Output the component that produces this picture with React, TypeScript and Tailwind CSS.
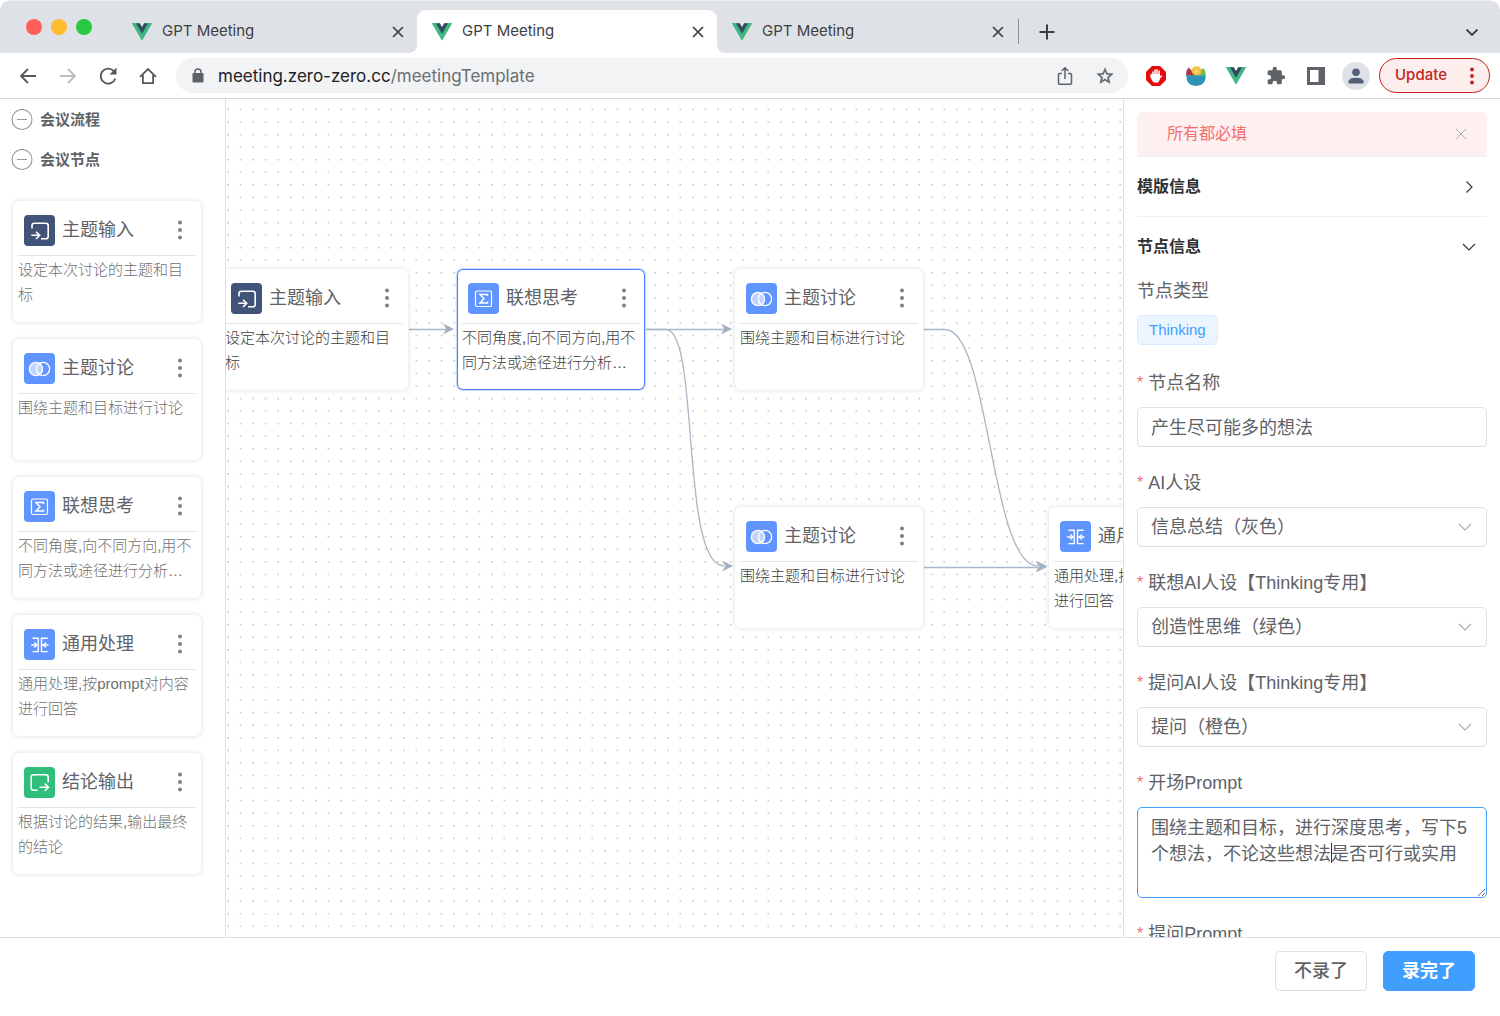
import React, { useState } from "react";

type NodeKind = "input" | "discuss" | "think" | "general" | "output";

const NODES: Record<NodeKind, { title: string; desc: string }> = {
  input: { title: "主题输入", desc: "设定本次讨论的主题和目标" },
  discuss: { title: "主题讨论", desc: "围绕主题和目标进行讨论" },
  think: { title: "联想思考", desc: "不同角度,向不同方向,用不同方法或途径进行分析…" },
  general: { title: "通用处理", desc: "通用处理,按prompt对内容进行回答" },
  output: { title: "结论输出", desc: "根据讨论的结果,输出最终的结论" },
};

function VueLogo() {
  return (
    <svg width="20" height="18" viewBox="0 0 256 221" aria-hidden="true">
      <path fill="#41b883" d="M204.8 0H256L128 220.8 0 0h97.9L128 51.2 157.4 0z" />
      <path fill="#41b883" d="m0 0 128 220.8L256 0h-51.2L128 132.5 50.6 0z" />
      <path fill="#35495e" d="M50.6 0 128 133.1 204.8 0h-47.4L128 51.2 97.9 0z" />
    </svg>
  );
}

function CrossIcon({ size, className }: { size: number; className: string }) {
  return (
    <svg width={size} height={size} viewBox="0 0 12 12" className={className} aria-hidden="true">
      <path d="M1 1 11 11M11 1 1 11" fill="none" stroke="currentColor" />
    </svg>
  );
}

function Chevron({ right = false }: { right?: boolean }) {
  return (
    <svg width="14" height="14" viewBox="0 0 14 14" fill="none" stroke="currentColor" strokeWidth="1.100" aria-hidden="true">
      {right ? <path d="M4.500 1.500 10 7l-5.500 5.500" /> : <path d="M1 4l6 6 6-6" />}
    </svg>
  );
}

function KindIcon({ kind }: { kind: NodeKind }) {
  const fill = kind === "input" ? "#42537a" : kind === "output" ? "#2fbf7a" : "#6095ff";
  return (
    <svg width="31" height="31" viewBox="0 0 31 31" className="shrink-0" aria-hidden="true">
      <rect width="31" height="31" rx="4" fill={fill} />
      <g fill="none" stroke="#fff" strokeWidth="1.600">
        {kind === "input" && (
          <>
            <path d="M8 13.500V10.500Q8 8.200 10.300 8.200H21.800Q24.200 8.200 24.200 10.500V21.500Q24.200 23.800 21.800 23.800H17" />
            <path d="M7.300 20.300H15.200M12 16.700 15.700 20.300 12 24" />
          </>
        )}
        {kind === "output" && (
          <>
            <path d="M24.200 15.300V10.200Q24.200 7.800 21.800 7.800H9.500Q7.200 7.800 7.200 10.200V20.800Q7.200 23.200 9.500 23.200H13.500" />
            <path d="M15.500 20.300H24.300M20.700 16.700 24.500 20.300 20.700 24" />
          </>
        )}
        {kind === "discuss" && (
          <g strokeWidth="1.300">
            <circle cx="12" cy="16" r="6.600" fill="#fff" fillOpacity="0.6" />
            <circle cx="19" cy="16" r="6.600" />
          </g>
        )}
        {kind === "think" && (
          <g strokeWidth="1.200">
            <rect x="7.500" y="8" width="16" height="15.500" rx="1.500" />
            <path strokeWidth="1.500" d="M19.500 13V11.500H12L16 15.800 12 20H19.500V18.500" />
          </g>
        )}
        {kind === "general" && (
          <g strokeWidth="1.400">
            <path d="M8.500 9.200H14.200V22.600H8.500M23.700 9.200H17.500V22.600H23.700M17.500 16H24.500M7.200 16H13" />
            <path d="M10.300 13.500 12.800 16 10.300 18.500M22 13.500 19.500 16 22 18.500" />
          </g>
        )}
      </g>
    </svg>
  );
}

function KebabDots() {
  return (
    <svg width="4" height="20" viewBox="0 0 4 20" fill="#808080" aria-hidden="true">
      <circle cx="2" cy="2.500" r="2" />
      <circle cx="2" cy="10" r="2" />
      <circle cx="2" cy="17.500" r="2" />
    </svg>
  );
}

function NodeCard({ kind, selected = false, soft = false }: { kind: NodeKind; selected?: boolean; soft?: boolean }) {
  const { title, desc } = NODES[kind];
  return (
    <article
      className={`h-[121px] w-[188px] rounded-md bg-white p-[5px] ${
        selected
          ? "shadow-[inset_0_0_0_1px_#4a80f5,0_0_1px_1px_#c5d6fc]"
          : "shadow-[0_0_4px_1px_rgba(0,0,0,0.10)]"
      }`}
    >
      <header className="flex h-[50px] items-center border-b border-[#e4e5e8] pr-[14px] pb-px pl-[6px]">
        <KindIcon kind={kind} />
        <h3 className="ml-[7px] flex-1 text-[18px] leading-6 whitespace-nowrap text-[#606266]">{title}</h3>
        <button type="button" aria-label={`${title}菜单`}>
          <KebabDots />
        </button>
      </header>
      <p className={`pt-px text-[15px] leading-[25px] font-light ${soft ? "text-[#707070]" : "text-[#404040]"}`}>
        {desc}
      </p>
    </article>
  );
}

function BrowserTab({ active = false }: { active?: boolean }) {
  return (
    <div
      role="tab"
      aria-selected={active}
      className={`relative flex h-[43px] w-[300px] items-center rounded-t-[9px] pr-[12px] pl-[15px] ${active ? "bg-white" : ""}`}
    >
      {active && (
        <>
          <svg className="absolute bottom-0 -left-[9px]" width="9" height="9" aria-hidden="true">
            <path d="M9 0V9H0Q9 9 9 0" fill="#fff" />
          </svg>
          <svg className="absolute -right-[9px] bottom-0" width="9" height="9" aria-hidden="true">
            <path d="M0 0V9H9Q0 9 0 0" fill="#fff" />
          </svg>
        </>
      )}
      <VueLogo />
      <span className="ml-[10px] flex-1 text-[15px] text-[#3c4043]">GPT Meeting</span>
      <button type="button" aria-label="关闭标签页" className="text-[#3c4043]">
        <svg width="14" height="14" viewBox="0 0 14 14" fill="none" stroke="currentColor" strokeWidth="1.700" aria-hidden="true">
          <path d="M2 2 12 12M12 2 2 12" />
        </svg>
      </button>
    </div>
  );
}

function TabStrip() {
  return (
    <div className="flex h-[53px] shrink-0 items-end rounded-t-[10px] border-t border-[#eceef0] bg-[#dee1e6]">
      <div className="mb-[18px] ml-[26px] flex w-[91px] gap-[9px]">
        <span className="size-4 rounded-full bg-[#ff5f57]" />
        <span className="size-4 rounded-full bg-[#febc2e]" />
        <span className="size-4 rounded-full bg-[#28c840]" />
      </div>
      <div role="tablist" className="flex">
        <BrowserTab />
        <BrowserTab active />
        <BrowserTab />
      </div>
      <div className="flex h-[43px] flex-1 items-center pr-[21px]">
        <span className="ml-px h-[25px] w-px bg-[#8d9196]" />
        <button type="button" aria-label="新标签页" className="ml-5">
          <svg width="16" height="16" viewBox="0 0 16 16" stroke="#3c4043" strokeWidth="2" aria-hidden="true">
            <path d="M8 .5V15.500M.5 8H15.500" />
          </svg>
        </button>
        <button type="button" aria-label="搜索标签页" className="ml-auto">
          <svg width="14" height="14" viewBox="0 0 14 14" fill="none" stroke="#3c4043" strokeWidth="1.800" aria-hidden="true">
            <path d="M1.500 4.500 7 10l5.500-5.500" />
          </svg>
        </button>
      </div>
    </div>
  );
}

function Toolbar() {
  return (
    <div className="flex h-[46px] shrink-0 items-center border-b border-[#d5d8db] bg-white pr-[10px] pl-[18px]">
      <div className="flex gap-5 text-[#5f6368]">
        <button type="button" aria-label="后退">
          <svg width="20" height="20" viewBox="0 0 20 20" fill="none" stroke="#55595e" strokeWidth="1.800" aria-hidden="true">
            <path d="M18 10H3.500M10 3 3 10l7 7" />
          </svg>
        </button>
        <button type="button" aria-label="前进">
          <svg width="20" height="20" viewBox="0 0 20 20" fill="none" stroke="#babcbe" strokeWidth="1.800" aria-hidden="true">
            <path d="M2 10H16.500M10 3l7 7-7 7" />
          </svg>
        </button>
        <button type="button" aria-label="重新加载">
          <svg width="20" height="20" viewBox="0 0 20 20" fill="none" stroke="#55595e" strokeWidth="1.900" aria-hidden="true">
            <path d="M17.300 12.500A7.500 7.500 0 1 1 15.600 4.900" />
            <path d="M18.500 1.500V8.500H11.500z" fill="#55595e" stroke="none" />
          </svg>
        </button>
        <button type="button" aria-label="主页">
          <svg width="20" height="20" viewBox="0 0 20 20" fill="none" stroke="#55595e" strokeWidth="1.800" aria-hidden="true">
            <path d="M2 10.800 10 3l8 7.800M4.900 9V17.200H15.100V9" />
          </svg>
        </button>
      </div>
      <div className="ml-[18px] flex h-[35px] flex-1 items-center rounded-full bg-[#f1f3f4] pr-[13px] pl-4">
        <svg width="12" height="16" viewBox="0 0 12 16" aria-hidden="true">
          <rect x=".5" y="5" width="11" height="9.500" rx="1.300" fill="#5f6368" />
          <path d="M3 5.500V4a3 3 0 0 1 6 0V5.500" fill="none" stroke="#5f6368" strokeWidth="1.500" />
        </svg>
        <button type="button" className="ml-[14px] flex-1 text-left text-[17px] leading-6 text-[#6b6e72]">
          <span className="text-[#202124]">meeting.zero-zero.cc</span>/meetingTemplate
        </button>
        <button type="button" aria-label="分享">
          <svg width="20" height="20" viewBox="0 0 20 20" fill="none" stroke="#5f6368" strokeWidth="1.500" aria-hidden="true">
            <path d="M7 7.500H4.500Q3.500 7.500 3.500 8.500V17Q3.500 18.200 4.500 18.200H15.500Q16.500 18.200 16.500 17V8.500Q16.500 7.500 15.500 7.500H13M10 13V2M6.700 5 10 1.700 13.300 5" />
          </svg>
        </button>
        <button type="button" aria-label="收藏" className="ml-5">
          <svg width="20" height="20" viewBox="0 0 24 24" fill="#5f6368" stroke="#5f6368" strokeWidth=".4" aria-hidden="true">
            <path d="M22 9.240l-7.190-.62L12 2 9.190 8.630 2 9.240l5.460 4.730L5.820 21 12 17.270 18.180 21l-1.630-7.030L22 9.240zM12 15.400l-3.760 2.270 1-4.280-3.320-2.880 4.380-.38L12 6.100l1.710 4.040 4.380.38-3.320 2.880 1 4.280L12 15.400z" />
          </svg>
        </button>
      </div>
      <div className="ml-[18px] flex items-center gap-5">
        <button type="button" aria-label="AdBlock">
          <svg width="20" height="20" viewBox="0 0 20 20" aria-hidden="true">
            <path d="M6 0H14L20 6V14L14 20H6L0 14V6z" fill="#e40d0d" />
            <g stroke="#fff" strokeWidth="1.500" strokeLinecap="round">
              <path d="M7 6V11M9 4V10M11 3.700V10M13.200 5V11M5.200 8.500V11.500" />
            </g>
            <path d="M4.600 10.500 6.200 8H14V12.500Q13.500 16.700 10 16.700 7 16.700 6 14.500z" fill="#fff" />
            <path d="M13 12.500 15.500 10" stroke="#fff" strokeWidth="1.500" strokeLinecap="round" />
          </svg>
        </button>
        <button type="button" aria-label="扩展程序 Bowl">
          <svg width="20" height="20" viewBox="0 0 20 20" aria-hidden="true">
            <path d="M.3 9.500Q-.5 4.500 2.500 1.500L11 9.500z" fill="#b33f4d" />
            <path d="M19.500 9.500Q20.500 4.500 17 2L10 9.500z" fill="#6cc04a" />
            <circle cx="10.500" cy="5.200" r="5" fill="#f5b82e" />
            <path d="M10.500 1V9M6.500 5.200H14.500M7.700 2.400 13.300 8M13.300 2.400 7.700 8" stroke="#fbdc84" strokeWidth=".7" />
            <path d="M2.300 3.300 9 9.500H.5Q0 6 2.300 3.300" fill="#b33f4d" />
            <path d="M2 6.500H3M3.500 5H4.500M5 7.800H6" stroke="#5d1f2a" />
            <path d="M.2 9.200H19.800Q19.800 20 10 20 .2 20 .2 9.200" fill="#2e94b5" />
          </svg>
        </button>
        <button type="button" aria-label="Vue.js devtools">
          <VueLogo />
        </button>
        <button type="button" aria-label="扩展程序">
          <svg width="20" height="20" viewBox="0 0 24 24" fill="#5f6368" aria-hidden="true">
            <path d="M20.500 11H19V7c0-1.100-.9-2-2-2h-4V3.500a2.500 2.500 0 0 0-5 0V5H4c-1.100 0-2 .9-2 2v3.800h1.500a2.700 2.700 0 0 1 0 5.400H2V20c0 1.100.9 2 2 2h3.800v-1.500a2.700 2.700 0 0 1 5.400 0V22H17c1.100 0 2-.9 2-2v-4h1.500a2.500 2.500 0 0 0 0-5z" />
          </svg>
        </button>
        <button type="button" aria-label="侧边栏">
          <svg width="20" height="20" viewBox="0 0 20 20" aria-hidden="true">
            <path fillRule="evenodd" d="M1 1H19V19H1zM4 4V16H12.500V4z" fill="#5f6368" />
          </svg>
        </button>
      </div>
      <button type="button" aria-label="个人资料" className="ml-4 flex size-7 items-center justify-center rounded-full bg-[#dee1e6]">
        <svg width="16" height="16" viewBox="0 0 16 16" fill="#525f77" aria-hidden="true">
          <circle cx="8" cy="4.300" r="3.800" />
          <path d="M.5 15.500V13Q1.500 9.800 8 9.700 14.500 9.800 15.500 13V15.500z" />
        </svg>
      </button>
      <button
        type="button"
        className="ml-[9px] flex h-[35px] w-[111px] items-center justify-between rounded-full border border-[#c5221f] bg-[#fbeeed] px-[15px] text-[15px] font-medium text-[#c5221f]"
      >
        Update
        <svg width="4" height="18" viewBox="0 0 4 18" fill="#c5221f" aria-hidden="true">
          <circle cx="2" cy="2.500" r="1.900" />
          <circle cx="2" cy="9" r="1.900" />
          <circle cx="2" cy="15.500" r="1.900" />
        </svg>
      </button>
    </div>
  );
}

function GroupHeading({ children }: { children: React.ReactNode }) {
  return (
    <button type="button" className="flex h-10 items-center gap-[7px] text-[15px] font-bold text-[#606266]">
      <svg width="22" height="22" viewBox="0 0 22 22" fill="none" stroke="#94969a" strokeWidth="1.100" aria-hidden="true">
        <circle cx="11" cy="10.500" r="10" />
        <path d="M6 10.500H16" />
      </svg>
      {children}
    </button>
  );
}

function Sidebar() {
  const kinds: NodeKind[] = ["input", "discuss", "think", "general", "output"];
  return (
    <nav className="flex w-[226px] shrink-0 flex-col overflow-hidden border-r border-[#dcdfe6] bg-white pt-px pl-[11px]">
      <GroupHeading>会议流程</GroupHeading>
      <GroupHeading>会议节点</GroupHeading>
      <div className="mt-[21px] ml-0.5 flex flex-col gap-[17px]">
        {kinds.map((kind) => (
          <NodeCard key={kind} kind={kind} soft />
        ))}
      </div>
    </nav>
  );
}

function ArrowHead({ x, y }: { x: number; y: number }) {
  return <path d={`M${x} ${y}l-11-5.500 3.200 5.500-3.200 5.500z`} fill="#a2b1c3" />;
}

function Canvas() {
  return (
    <section className="relative min-w-0 flex-1 overflow-hidden bg-white" aria-label="流程画布">
      <svg className="absolute inset-0 h-full w-full" aria-hidden="true">
        <defs>
          <pattern id="dots" width="12.566" height="12.566" patternUnits="userSpaceOnUse">
            <circle cx="2" cy="10.500" r="0.750" fill="#a6a6a6" />
          </pattern>
        </defs>
        <rect width="100%" height="100%" fill="url(#dots)" />
        <g fill="none" stroke="#a9b7c8" strokeWidth="1.300">
          <path d="M183 230.500H222" />
          <path d="M420 230.500H498" />
          <path d="M420 230.500H440C474 231 454 467 498 467" />
          <path d="M698 230.500H719C764 231 764 467 812 467" />
          <path d="M698 468.500H812" />
        </g>
        <ArrowHead x={228} y={230} />
        <ArrowHead x={506} y={230} />
        <ArrowHead x={507} y={467} />
        <ArrowHead x={821} y={467} />
        <ArrowHead x={821} y={468} />
      </svg>
      <div className="absolute top-[170px] -left-[6px]">
        <NodeCard kind="input" />
      </div>
      <div className="absolute top-[170px] left-[231px]">
        <NodeCard kind="think" selected />
      </div>
      <div className="absolute top-[170px] left-[509px]">
        <NodeCard kind="discuss" />
      </div>
      <div className="absolute top-[408px] left-[509px]">
        <NodeCard kind="discuss" />
      </div>
      <div className="absolute top-[408px] left-[823px]">
        <NodeCard kind="general" />
      </div>
    </section>
  );
}

function FieldLabel({ id, children }: { id: string; children: React.ReactNode }) {
  return (
    <label htmlFor={id} className="mb-[10px] flex h-7 items-center text-[18px] whitespace-nowrap text-[#606266]">
      <span className="mr-[5px] text-[16px] text-[#f56c6c]">*</span>
      <span>{children}</span>
    </label>
  );
}

function SelectField({ id, label, value }: { id: string; label: string; value: string }) {
  return (
    <div>
      <FieldLabel id={id}>{label}</FieldLabel>
      <div className="relative text-[#a8abb2]">
        <select
          id={id}
          defaultValue={value}
          className="h-10 w-full appearance-none rounded-[5px] border border-[#dcdfe6] bg-white px-[13px] text-[18px] text-[#606266] outline-none"
        >
          <option value={value}>{value}</option>
        </select>
        <span className="pointer-events-none absolute inset-y-0 right-[15px] flex items-center">
          <Chevron />
        </span>
      </div>
    </div>
  );
}

function PropertyPanel() {
  const [name, setName] = useState("产生尽可能多的想法");
  const [prompt, setPrompt] = useState("围绕主题和目标，进行深度思考，写下5个想法，不论这些想法是否可行或实用");
  return (
    <aside className="w-[377px] shrink-0 overflow-hidden border-l border-[#dcdfe6] bg-white px-[13px] pt-[13px]">
      <div role="alert" className="flex h-[44px] items-center justify-between rounded-[5px] bg-[#fef0f0] pr-5 pl-[30px] text-[16px] text-[#f56c6c]">
        所有都必填
        <button type="button" aria-label="关闭提示">
          <CrossIcon size={12} className="text-[#a8abb2]" />
        </button>
      </div>
      <div className="border-t border-[#ebeef5]">
        <button
          type="button"
          aria-expanded="false"
          className="flex h-[60px] w-full items-center justify-between border-b border-[#ebeef5] pr-[11px] text-[16px] font-bold text-[#303133]"
        >
          模版信息
          <Chevron right />
        </button>
        <button
          type="button"
          aria-expanded="true"
          className="flex h-[60px] w-full items-center justify-between pr-[11px] text-[16px] font-bold text-[#303133]"
        >
          节点信息
          <Chevron />
        </button>
      </div>
      <form className="flex flex-col gap-[22px]">
        <div>
          <div className="mb-[10px] flex h-7 items-center text-[18px] text-[#606266]">节点类型</div>
          <div className="h-8">
            <span className="inline-flex h-[30px] items-center rounded-[5px] border border-[#d9ecff] bg-[#ecf5ff] px-[11px] text-[15px] text-[#409eff]">
              Thinking
            </span>
          </div>
        </div>
        <div>
          <FieldLabel id="node-name">节点名称</FieldLabel>
          <input
            id="node-name"
            value={name}
            onChange={(e) => setName(e.target.value)}
            className="block h-10 w-full rounded-[5px] border border-[#dcdfe6] bg-white px-[13px] pb-0.5 text-[18px] text-[#606266] outline-none"
          />
        </div>
        <SelectField id="persona" label="AI人设" value="信息总结（灰色）" />
        <SelectField id="think-persona" label="联想AI人设【Thinking专用】" value="创造性思维（绿色）" />
        <SelectField id="ask-persona" label="提问AI人设【Thinking专用】" value="提问（橙色）" />
        <div>
          <FieldLabel id="opening">开场Prompt</FieldLabel>
          <div className="relative">
            <textarea
              id="opening"
              value={prompt}
              onChange={(e) => setPrompt(e.target.value)}
              className="block h-[91px] w-full resize-y rounded-[5px] border border-[#409eff] bg-white px-[13px] py-[7px] text-[18px] leading-[26px] text-[#606266] outline-none"
            />
            <span className="pointer-events-none absolute top-[36px] left-[194px] h-5 w-px bg-[#303133]" />
          </div>
        </div>
        <div>
          <FieldLabel id="question">提问Prompt</FieldLabel>
          <textarea id="question" className="block h-[91px] w-full rounded-[5px] border border-[#dcdfe6]" />
        </div>
      </form>
    </aside>
  );
}

export default function App() {
  return (
    <div className="flex h-screen flex-col overflow-hidden rounded-[10px] bg-white font-['Liberation_Sans','Noto_Sans_CJK_SC',sans-serif]">
      <header className="shrink-0 font-['Inter',sans-serif]">
        <TabStrip />
        <Toolbar />
      </header>
      <main className="flex min-h-0 flex-1">
        <Sidebar />
        <Canvas />
        <PropertyPanel />
      </main>
      <footer className="flex h-[79px] shrink-0 items-start justify-end gap-4 border-t border-[#dcdfe6] bg-white pt-[13px] pr-[25px]">
        <button type="button" className="h-10 rounded-[5px] border border-[#dcdfe6] bg-white px-[18px] text-[18px] font-medium text-[#606266]">
          不录了
        </button>
        <button type="button" className="h-10 rounded-[5px] border border-[#409eff] bg-[#409eff] px-[18px] text-[18px] font-bold text-white">
          录完了
        </button>
      </footer>
    </div>
  );
}
